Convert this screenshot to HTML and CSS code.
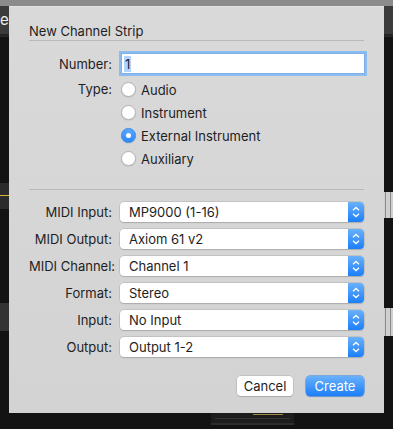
FILE: index.html
```html
<!doctype html>
<html lang="en">
<head>
  <meta charset="utf-8">
  <title>New Channel Strip</title>
  <link rel="stylesheet" href="styles.css">
</head>
<body>

	<div class="app">
		<div class="menubar"></div>
		<div class="toolbar"><span class="toolbar-title">e</span></div>
		<div class="workspace">
			<div class="strip strip-left-a"><span class="strip-led"></span></div>
			<div class="strip strip-left-b"></div>
			<div class="keys keys-a"></div>
			<div class="keys keys-b"></div>
			<div class="fader-box"><span class="fader-led"></span></div>
		</div>

		<!-- the sheet lies over the mixer window -->
		<div class="sheet">
			<h1 class="sheet-title">New Channel Strip</h1>
			<div class="sep"></div>

			<div class="form form-top">
				<div class="lbl">Number:</div>
				<div class="field"><span class="field-sel">1</span></div>

				<div class="lbl lbl-type">Type:</div>
				<div class="radios">
					<div class="radio"><span class="dot"></span>Audio</div>
					<div class="radio"><span class="dot"></span>Instrument</div>
					<div class="radio"><span class="dot on"></span>External Instrument</div>
					<div class="radio"><span class="dot"></span>Auxiliary</div>
				</div>
			</div>

			<div class="sep sep-lower"></div>

			<div class="form form-pops">
				<div class="lbl">MIDI Input:</div>
				<div class="popup"><span class="popup-text">MP9000 (1-16)</span><span class="stepper"><svg width="16" height="20" viewBox="0 0 16 20"><path d="M5 8.2 L8 5.4 L11 8.2 M5 11.8 L8 14.6 L11 11.8" fill="none" stroke="#fff" stroke-width="1.3"/></svg></span></div>

				<div class="lbl">MIDI Output:</div>
				<div class="popup"><span class="popup-text">Axiom 61 v2</span><span class="stepper"><svg width="16" height="20" viewBox="0 0 16 20"><path d="M5 8.2 L8 5.4 L11 8.2 M5 11.8 L8 14.6 L11 11.8" fill="none" stroke="#fff" stroke-width="1.3"/></svg></span></div>

				<div class="lbl">MIDI Channel:</div>
				<div class="popup"><span class="popup-text">Channel 1</span><span class="stepper"><svg width="16" height="20" viewBox="0 0 16 20"><path d="M5 8.2 L8 5.4 L11 8.2 M5 11.8 L8 14.6 L11 11.8" fill="none" stroke="#fff" stroke-width="1.3"/></svg></span></div>

				<div class="lbl">Format:</div>
				<div class="popup"><span class="popup-text">Stereo</span><span class="stepper"><svg width="16" height="20" viewBox="0 0 16 20"><path d="M5 8.2 L8 5.4 L11 8.2 M5 11.8 L8 14.6 L11 11.8" fill="none" stroke="#fff" stroke-width="1.3"/></svg></span></div>

				<div class="lbl">Input:</div>
				<div class="popup"><span class="popup-text">No Input</span><span class="stepper"><svg width="16" height="20" viewBox="0 0 16 20"><path d="M5 8.2 L8 5.4 L11 8.2 M5 11.8 L8 14.6 L11 11.8" fill="none" stroke="#fff" stroke-width="1.3"/></svg></span></div>

				<div class="lbl">Output:</div>
				<div class="popup"><span class="popup-text">Output 1-2</span><span class="stepper"><svg width="16" height="20" viewBox="0 0 16 20"><path d="M5 8.2 L8 5.4 L11 8.2 M5 11.8 L8 14.6 L11 11.8" fill="none" stroke="#fff" stroke-width="1.3"/></svg></span></div>
			</div>

			<div class="actions">
				<div class="btn">Cancel</div>
				<div class="btn btn-default">Create</div>
			</div>
		</div>
	</div>

</body>
</html>
```

FILE: styles.css
```css
body {
	margin			: 0;
	background		: #131313;
	font-family		: "Inter", "Liberation Sans", sans-serif;
	font-size		: 13px;
	color			: #1e1e1e;
}

.app {
	position		: relative;
	width			: 393px;
	height			: 429px;
	overflow		: hidden;
}

/* background window ------------------------------------------------ */

.menubar {
	height			: 6px;
	background		: #8b8b8b;
}

.toolbar {
	height			: 28px;
	background		: #3b3b3b;
	border-bottom	: 2px solid #222;
}

.toolbar-title {
	display			: block;
	padding			: 5px 0 0 0;
	color			: #eee;
	font-size		: 15px;
	line-height		: 18px;
}

.workspace {
	position		: relative;
	height			: 393px;
	border-top		: 1px solid #2a2a2a;
}

.strip {
	position		: absolute;
	left			: 0;
	width			: 12px;
	background		: #2b2b2b;
}

.strip-left-a {
	top				: 146px;
	height			: 26px;
}

.strip-led {
	position		: absolute;
	top				: 12px;
	left			: 0;
	width			: 12px;
	height			: 1px;
	background		: #d8b43a;
}

.strip-left-b {
	top				: 266px;
	height			: 28px;
	background		: #333;
}

.keys {
	position		: absolute;
	right			: 0;
	width			: 12px;
	background		: #cfcfcf;
	background-image: repeating-linear-gradient(90deg, #cfcfcf 0 4px, #8a8a8a 4px 5px);
}

.keys-a {
	top				: 155px;
	height			: 26px;
}

.keys-b {
	top				: 271px;
	height			: 28px;
}

.fader-box {
	position		: absolute;
	left			: 211px;
	top				: 376px;
	width			: 83px;
	height			: 10px;
	background		: #1d1d1d;
	border-bottom	: 2px solid #2c2c2c;
}

.fader-box::before {
	content			: "";
	position		: absolute;
	left			: 4px;
	right			: 4px;
	top				: 5px;
	height			: 1px;
	background		: #333;
}

.fader-led {
	position		: absolute;
	left			: 42px;
	top				: 1px;
	width			: 30px;
	height			: 1px;
	background		: #a08a4a;
}

/* sheet ------------------------------------------------------------ */

.sheet {
	position		: absolute;
	left			: 9px;
	top				: 6px;
	width			: 375px;
	height			: 407px;
	box-sizing		: border-box;
	padding			: 17px 20px 0 20px;
	background		: linear-gradient(#d9d9d9, #d3d3d3);
	border-top		: 1px solid #e4e4e4;
}

.sheet-title {
	margin			: 0;
	font-size		: 13px;
	font-weight		: normal;
	line-height		: 16px;
	margin-top		: -1px;
}

.sep {
	height			: 1px;
	margin-top		: 1px;
	background		: #b9b9b9;
}

.sep-lower {
	margin-top		: 19px;
}

.form {
	display			: grid;
	grid-template-columns: 83px 1fr;
	column-gap		: 8px;
	align-items		: center;
}

.form-top {
	margin-top		: 12px;
	row-gap			: 4px;
}

.form-pops {
	margin-top		: 12px;
	row-gap			: 7px;
}

.lbl {
	text-align		: right;
	white-space		: nowrap;
	line-height		: 16px;
}

.lbl-type {
	align-self		: start;
	margin-top		: 3px;
}

.field {
	margin-left		: 1px;
	height			: 21px;
	box-sizing		: border-box;
	padding			: 2px 0 0 2px;
	background		: #fff;
	border			: 1px solid #7fb0e6;
	box-shadow		: 0 0 0 2px #8bbcf0;
	margin-right	: -1px;
	line-height		: 16px;
}

.field-sel {
	display			: inline-block;
	padding			: 0 1px;
	background		: #b3d4fc;
}

.radios {
	display			: flex;
	flex-direction	: column;
}

.radio {
	display			: flex;
	align-items		: center;
	height			: 23px;
	line-height		: 16px;
}

.dot {
	width			: 15px;
	height			: 15px;
	box-sizing		: border-box;
	margin			: 0 5px 0 1px;
	border-radius	: 50%;
	background		: #fff;
	border			: 1px solid #b3b3b3;
	box-shadow		: 0 0.5px 1px rgba(0, 0, 0, 0.15);
	position		: relative;
}

.dot.on {
	background		: linear-gradient(#5aa8fc, #2a8afa);
	border-color	: #3088f0;
}

.dot.on::after {
	content			: "";
	position		: absolute;
	left			: 4px;
	top				: 4px;
	width			: 5px;
	height			: 5px;
	border-radius	: 50%;
	background		: #fff;
}

.popup {
	display			: flex;
	height			: 20px;
	background		: #fff;
	border-radius	: 4px;
	box-shadow		: 0 0 0 0.5px #b0b0b0, 0 1px 1px rgba(0, 0, 0, 0.2);
}

.popup-text {
	flex			: 1;
	padding-left	: 9px;
	line-height		: 20px;
}

.stepper {
	width			: 16px;
	height			: 20px;
	border-radius	: 0 4px 4px 0;
	background		: linear-gradient(#69b1fb, #1c7ff9);
}

.stepper svg {
	display			: block;
}

.actions {
	display			: flex;
	justify-content	: flex-end;
	gap				: 13px;
	margin-top		: 19px;
}

.btn {
	height			: 20px;
	line-height		: 20px;
	text-align		: center;
	width			: 56px;
	background		: #fff;
	border-radius	: 4px;
	box-shadow		: 0 0 0 0.5px #b0b0b0, 0 1px 1px rgba(0, 0, 0, 0.2);
}

.btn-default {
	width			: 58px;
	color			: #fff;
	background		: linear-gradient(#69b1fb, #1c7ff9);
	box-shadow		: 0 0 0 0.5px #2a7fe6, 0 1px 1px rgba(0, 0, 0, 0.2);
}
```
